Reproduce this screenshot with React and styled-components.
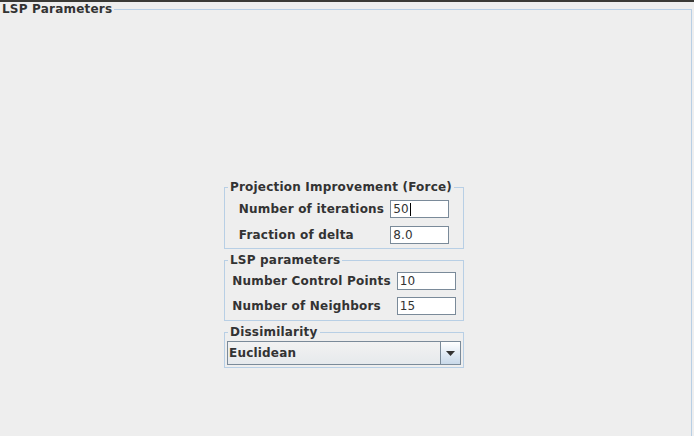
import React from 'react';
import styled, { createGlobalStyle } from 'styled-components';

const GlobalStyle = createGlobalStyle`
    html, body {
        margin: 0;
        padding: 0;
        background: #eeeeee;
    }
    body {
        font-family: "DejaVu Sans", "Liberation Sans", sans-serif;
        font-size: 12px;
        color: #333333;
    }
`;

const Window = styled.div`
    width: 694px;
    height: 436px;
    overflow: hidden;
    border-top: 2px solid #3a3935;
    box-sizing: border-box;
`;

const OuterPanel = styled.fieldset`
    margin: 0;
    width: 692px;
    height: 440px;
    box-sizing: border-box;
    border: 1px solid #b8cfe5;
    border-left: none;
    border-bottom: none;
    padding: 164px 3px 0 0;
    display: flex;
    flex-direction: column;
    align-items: center;
`;

const Title = styled.legend`
    font-weight: bold;
    font-size: 12px;
    line-height: 14px;
    letter-spacing: 0.2px;
    color: #333333;
    padding: 0 2px;
    margin-left: ${({ $offset }) => $offset || 0}px;
`;

const Column = styled.div`
    width: 240px;
    display: flex;
    flex-direction: column;
    gap: ${({ $gap }) => $gap || 4}px;
`;

const Group = styled.fieldset`
    margin: 0;
    min-width: 0;
    border: 1px solid #b8cfe5;
    padding: ${({ $pad }) => $pad};
`;

const Rows = styled.div`
    display: grid;
    grid-template-columns: auto auto;
    justify-content: center;
    align-items: center;
    column-gap: ${({ $gap }) => $gap}px;
    row-gap: ${({ $rowGap }) => $rowGap}px;
`;

const Label = styled.span`
    font-weight: bold;
    font-size: 12px;
    line-height: 14px;
    letter-spacing: 0.2px;
    white-space: nowrap;
`;

const Field = styled.div`
    width: 59px;
    height: 18px;
    box-sizing: border-box;
    border: 1px solid #7a8a99;
    background: #ffffff;
    font-size: 12px;
    line-height: 16px;
    letter-spacing: 0.2px;
    padding-left: 2px;
    display: flex;
    align-items: center;
`;

const Caret = styled.span`
    display: inline-block;
    width: 1px;
    height: 13px;
    background: #000;
    margin-left: 1px;
`;

const Combo = styled.div`
    height: 24px;
    box-sizing: border-box;
    border: 1px solid #7a8a99;
    background: #eeeeee;
    display: flex;
    align-items: stretch;
`;

const ComboValue = styled.div`
    flex: 1;
    font-weight: bold;
    font-size: 12px;
    letter-spacing: 0.2px;
    display: flex;
    align-items: center;
    padding-left: 1px;
    background: linear-gradient(#f2f2f2, #e6e9ec);
`;

const ArrowButton = styled.div`
    width: 19px;
    border-left: 1px solid #7a8a99;
    background: linear-gradient(#ffffff, #dde8f3 60%, #c9d9e9);
    display: flex;
    align-items: center;
    justify-content: center;
`;

const rows1 = [
    { label: 'Number of iterations', value: '50', caret: true },
    { label: 'Fraction of delta', value: '8.0' },
];

const rows2 = [
    { label: 'Number Control Points', value: '10' },
    { label: 'Number of Neighbors', value: '15' },
];

const App = () => {
    return (
        <Window>
            <GlobalStyle />
            <OuterPanel>
                <Title>LSP Parameters</Title>
                <Column>
                    <Group $pad="6px 0 4px 0">
                        <Title $offset={3}>Projection Improvement (Force)</Title>
                        <Rows $gap={6} $rowGap={8}>
                            {rows1.map(r => (
                                <React.Fragment key={r.label}>
                                    <Label>{r.label}</Label>
                                    <Field>{r.value}{r.caret && <Caret />}</Field>
                                </React.Fragment>
                            ))}
                        </Rows>
                    </Group>
                    <Group $pad="5px 0 5px 0">
                        <Title $offset={3}>LSP parameters</Title>
                        <Rows $gap={6} $rowGap={7}>
                            {rows2.map(r => (
                                <React.Fragment key={r.label}>
                                    <Label>{r.label}</Label>
                                    <Field>{r.value}</Field>
                                </React.Fragment>
                            ))}
                        </Rows>
                    </Group>
                    <Group $pad="2px 2px 2px 2px">
                        <Title $offset={1}>Dissimilarity</Title>
                        <Combo>
                            <ComboValue>Euclidean</ComboValue>
                            <ArrowButton>
                                <svg width="9" height="5" viewBox="0 0 9 5">
                                    <path d="M0 0 H9 L4.5 5 Z" fill="#333" />
                                </svg>
                            </ArrowButton>
                        </Combo>
                    </Group>
                </Column>
            </OuterPanel>
        </Window>
    );
};

export default App;
